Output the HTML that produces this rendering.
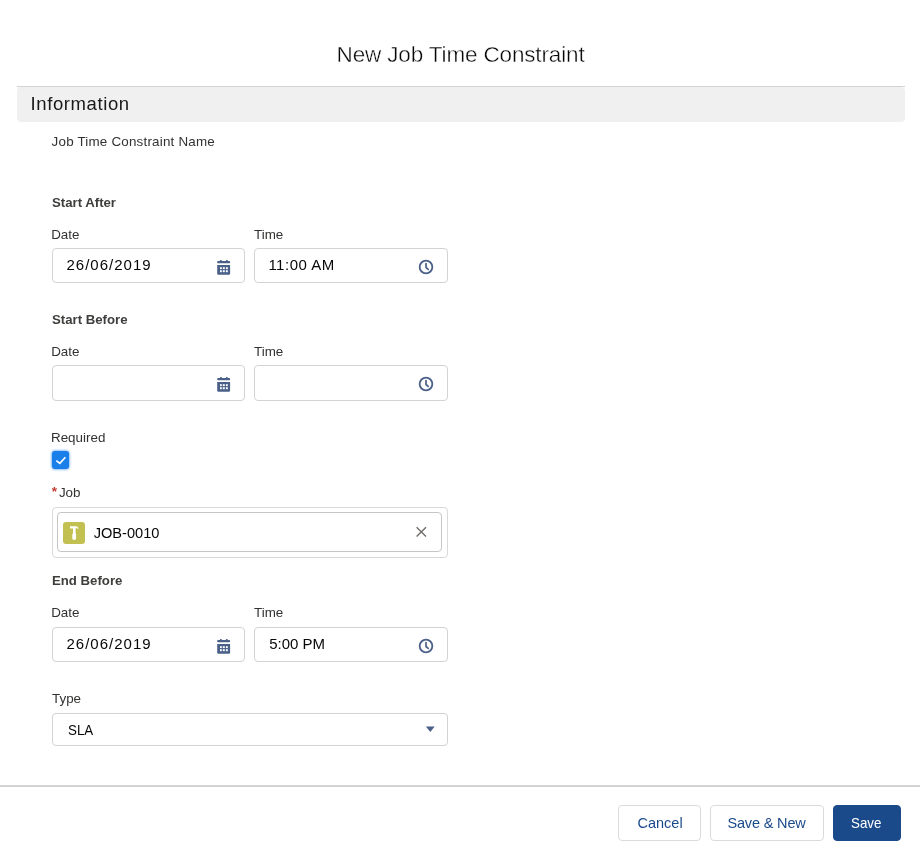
<!DOCTYPE html>
<html><head><meta charset="utf-8">
<style>
html,body{margin:0;padding:0;background:#fff;}
body{width:920px;height:857px;position:relative;overflow:hidden;font-family:"Liberation Sans",sans-serif;color:#3e3e3c;}
.t{position:absolute;white-space:nowrap;transform:translateZ(0);}
.box{position:absolute;box-sizing:border-box;border:1px solid #d5d3d1;border-radius:4px;background:#fff;}
.lbl{font-size:13.4px;line-height:13.4px;color:#333231;}
.hd{font-size:13.2px;line-height:13.2px;font-weight:bold;color:#3e3e3c;}
.val{font-size:15px;line-height:15px;color:#080707;}
.ic{position:absolute;}
.btn{position:absolute;box-sizing:border-box;top:805px;height:36px;border:1px solid #dddbda;border-radius:4px;background:#fff;}
.bt{font-size:14.5px;line-height:14.5px;color:#1b4a8b;}
</style></head><body>

<!-- title -->
<div class="t" style="left:336.6px;top:43.9px;font-size:22.5px;line-height:22.5px;letter-spacing:-0.15px;color:#080707;-webkit-text-stroke:0.4px #fff;">New Job Time Constraint</div>

<!-- section header -->
<div style="position:absolute;left:17px;top:86px;width:888px;height:1px;background:#d5d3d1;"></div>
<div style="position:absolute;left:17px;top:87px;width:888px;height:35px;background:#f0f0f0;border-radius:4px;"></div>
<div class="t" style="left:30.6px;top:95.3px;font-size:18.5px;line-height:18.5px;letter-spacing:0.6px;color:#181818;">Information</div>

<div class="t lbl" style="left:51.6px;top:134.5px;letter-spacing:0.2px;">Job Time Constraint Name</div>

<!-- Start After -->
<div class="t hd" style="left:52px;top:195.6px;">Start After</div>
<div class="t lbl" style="left:51.2px;top:227.5px;">Date</div>
<div class="t lbl" style="left:254px;top:227.5px;">Time</div>
<div class="box" style="left:52px;top:248px;width:193px;height:35px;"></div>
<div class="box" style="left:254px;top:248px;width:194px;height:35px;"></div>
<div class="t val" style="left:66.5px;top:257.3px;letter-spacing:1px;">26/06/2019</div>
<div class="t val" style="left:268.4px;top:257.3px;letter-spacing:0.5px;">11:00 AM</div>

<!-- Start Before -->
<div class="t hd" style="left:52px;top:312.8px;">Start Before</div>
<div class="t lbl" style="left:51.2px;top:344.6px;">Date</div>
<div class="t lbl" style="left:254px;top:344.6px;">Time</div>
<div class="box" style="left:52px;top:365px;width:193px;height:36px;"></div>
<div class="box" style="left:254px;top:365px;width:194px;height:36px;"></div>

<!-- Required -->
<div class="t lbl" style="left:51px;top:430.7px;">Required</div>
<div style="position:absolute;left:52px;top:451px;width:17px;height:18px;background:#1b7fea;border-radius:3px;box-shadow:0 0 3px #1b7fea;"></div>
<svg class="ic" style="left:52px;top:451px;" width="18" height="18" viewBox="0 0 18 18"><path d="M4.3 9.6 L7.8 12.4 L13.4 6.2" fill="none" stroke="#fff" stroke-width="1.6"/></svg>

<!-- Job -->
<div class="t" style="left:51.8px;top:485px;font-size:13.5px;line-height:13.5px;font-weight:bold;color:#c23934;">*</div>
<div class="t lbl" style="left:58.9px;top:485.5px;">Job</div>
<div class="box" style="left:52px;top:507px;width:396px;height:51px;border-color:#d9d9d9;"></div>
<div class="box" style="left:57px;top:512px;width:385px;height:40px;border-color:#c6c6c6;"></div>
<div style="position:absolute;left:63px;top:522px;width:22px;height:22px;background:#c1c051;border-radius:3px;"></div>
<svg class="ic" style="left:414px;top:525px;" width="14" height="14" viewBox="0 0 14 14"><path d="M2.6 2.2 L12 11.4 M12 2.2 L2.6 11.4" stroke="#706e6b" stroke-width="1.4" fill="none"/></svg><svg class="ic" style="left:63px;top:522px;" width="22" height="22" viewBox="0 0 22 22"><path d="M7 4.3 H13.2 Q15.4 4.7 15.6 6.9 Q14.8 6.3 13.4 6.2 H12.6 V11.2 Q13.1 11.9 13.1 12.8 V16.8 Q13.1 17.9 11.2 17.9 Q9.3 17.9 9.3 16.8 V12.8 Q9.3 11.9 10 11.2 V6.6 H7 Z" fill="#fff"/></svg>
<div class="t val" style="left:93.7px;top:526.2px;font-size:14.6px;line-height:14.6px;">JOB-0010</div>

<!-- End Before -->
<div class="t hd" style="left:52px;top:574px;">End Before</div>
<div class="t lbl" style="left:51.2px;top:605.8px;">Date</div>
<div class="t lbl" style="left:254px;top:605.8px;">Time</div>
<div class="box" style="left:52px;top:627px;width:193px;height:35px;"></div>
<div class="box" style="left:254px;top:627px;width:194px;height:35px;"></div>
<div class="t val" style="left:66.5px;top:636.2px;letter-spacing:1px;">26/06/2019</div>
<div class="t val" style="left:269.2px;top:636.2px;">5:00 PM</div>

<!-- Type -->
<div class="t lbl" style="left:52px;top:691.7px;">Type</div>
<div class="box" style="left:52px;top:713px;width:396px;height:33px;"></div>
<div class="t val" style="left:68.3px;top:722.3px;transform:translateZ(0) scaleX(0.89);transform-origin:0 0;">SLA</div>
<svg class="ic" style="left:425px;top:726px;" width="10" height="7" viewBox="0 0 10 7"><path d="M0.9 0.6 L9.7 0.6 L5.3 6 Z" fill="#4b6089"/></svg>

<!-- footer -->
<div style="position:absolute;left:0;top:785px;width:920px;height:2px;background:#d5d3d1;"></div>
<div class="btn" style="left:618px;width:83px;"></div>
<div class="btn" style="left:710px;width:114px;"></div>
<div class="btn" style="left:833px;width:68px;background:#1b4a8b;border-color:#1b4a8b;"></div>
<div class="t bt" style="left:637.5px;top:815.5px;">Cancel</div>
<div class="t bt" style="left:727.4px;top:815.5px;letter-spacing:-0.15px;">Save &amp; New</div>
<div class="t bt" style="left:851.2px;top:815.5px;transform:translateZ(0) scaleX(0.92);transform-origin:0 0;color:#fff;">Save</div>

<svg class="ic" style="left:217px;top:259px;" width="14" height="16" viewBox="0 0 14 16"><rect x="3" y="1" width="1.8" height="1.8" rx="0.6" fill="#4b6089"/><rect x="8.9" y="1" width="1.8" height="1.8" rx="0.6" fill="#4b6089"/><rect x="0.2" y="2.1" width="12.9" height="2.2" rx="0.8" fill="#4b6089"/><path d="M0.2 6 H13.1 V14.5 Q13.1 15.7 11.9 15.7 H1.4 Q0.2 15.7 0.2 14.5 Z" fill="#4b6089"/><g fill="#fff"><rect x="3" y="8.2" width="1.8" height="1.9"/><rect x="5.8" y="8.2" width="2" height="1.9"/><rect x="8.9" y="8.2" width="1.9" height="1.9"/><rect x="3" y="11.2" width="1.8" height="2"/><rect x="5.8" y="11.2" width="2" height="2"/><rect x="8.9" y="11.2" width="1.9" height="2"/></g></svg><svg class="ic" style="left:418px;top:259px;" width="16" height="16" viewBox="0 0 16 16"><circle cx="8" cy="8" r="6.35" fill="none" stroke="#4b6089" stroke-width="1.8"/><path d="M8 4.6 V8.5 L10.2 10.4" fill="none" stroke="#4b6089" stroke-width="1.7" stroke-linecap="round" stroke-linejoin="round"/></svg><svg class="ic" style="left:217px;top:376px;" width="14" height="16" viewBox="0 0 14 16"><rect x="3" y="1" width="1.8" height="1.8" rx="0.6" fill="#4b6089"/><rect x="8.9" y="1" width="1.8" height="1.8" rx="0.6" fill="#4b6089"/><rect x="0.2" y="2.1" width="12.9" height="2.2" rx="0.8" fill="#4b6089"/><path d="M0.2 6 H13.1 V14.5 Q13.1 15.7 11.9 15.7 H1.4 Q0.2 15.7 0.2 14.5 Z" fill="#4b6089"/><g fill="#fff"><rect x="3" y="8.2" width="1.8" height="1.9"/><rect x="5.8" y="8.2" width="2" height="1.9"/><rect x="8.9" y="8.2" width="1.9" height="1.9"/><rect x="3" y="11.2" width="1.8" height="2"/><rect x="5.8" y="11.2" width="2" height="2"/><rect x="8.9" y="11.2" width="1.9" height="2"/></g></svg><svg class="ic" style="left:418px;top:376px;" width="16" height="16" viewBox="0 0 16 16"><circle cx="8" cy="8" r="6.35" fill="none" stroke="#4b6089" stroke-width="1.8"/><path d="M8 4.6 V8.5 L10.2 10.4" fill="none" stroke="#4b6089" stroke-width="1.7" stroke-linecap="round" stroke-linejoin="round"/></svg><svg class="ic" style="left:217px;top:638px;" width="14" height="16" viewBox="0 0 14 16"><rect x="3" y="1" width="1.8" height="1.8" rx="0.6" fill="#4b6089"/><rect x="8.9" y="1" width="1.8" height="1.8" rx="0.6" fill="#4b6089"/><rect x="0.2" y="2.1" width="12.9" height="2.2" rx="0.8" fill="#4b6089"/><path d="M0.2 6 H13.1 V14.5 Q13.1 15.7 11.9 15.7 H1.4 Q0.2 15.7 0.2 14.5 Z" fill="#4b6089"/><g fill="#fff"><rect x="3" y="8.2" width="1.8" height="1.9"/><rect x="5.8" y="8.2" width="2" height="1.9"/><rect x="8.9" y="8.2" width="1.9" height="1.9"/><rect x="3" y="11.2" width="1.8" height="2"/><rect x="5.8" y="11.2" width="2" height="2"/><rect x="8.9" y="11.2" width="1.9" height="2"/></g></svg><svg class="ic" style="left:418px;top:638px;" width="16" height="16" viewBox="0 0 16 16"><circle cx="8" cy="8" r="6.35" fill="none" stroke="#4b6089" stroke-width="1.8"/><path d="M8 4.6 V8.5 L10.2 10.4" fill="none" stroke="#4b6089" stroke-width="1.7" stroke-linecap="round" stroke-linejoin="round"/></svg>

</body></html>
